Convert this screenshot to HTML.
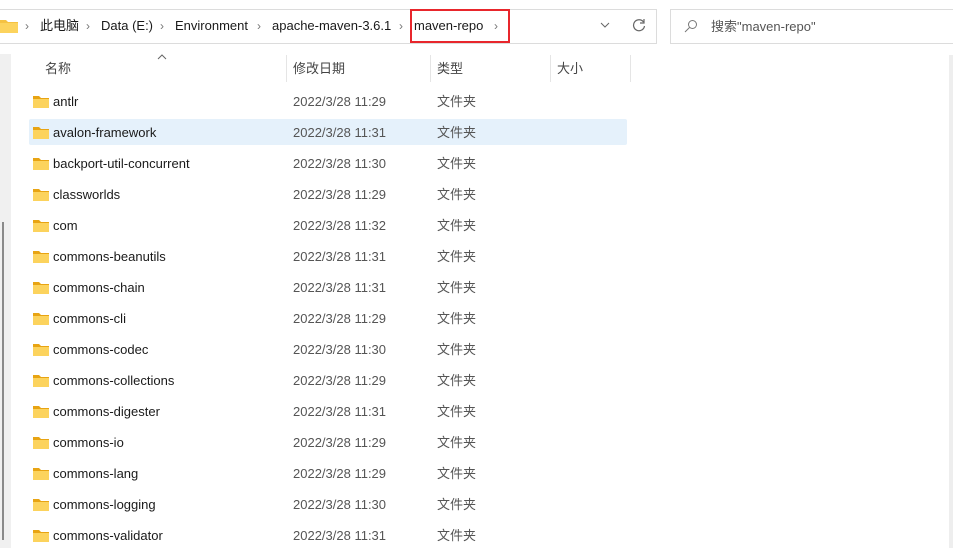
<!DOCTYPE html>
<html><head><meta charset="utf-8"><style>
*{margin:0;padding:0;box-sizing:border-box}
body{width:953px;height:548px;background:#fff;position:relative;overflow:hidden;font-family:"Liberation Sans","Noto Sans CJK SC",sans-serif;font-size:13px;color:#1a1a1a}
span{line-height:16px;height:16px;display:inline-block}
.abs{position:absolute;white-space:nowrap}
.addr{left:-2px;top:9px;width:659px;height:35px;border:1px solid #dcdcdc;border-left:none}
.search{left:670px;top:9px;width:290px;height:35px;border:1px solid #dcdcdc}
.chev{color:#777;font-size:12px}
.hdr{color:#444;font-size:13px}
.sep{position:absolute;top:55px;width:1px;height:27px;background:#e5e5e5}
.row{position:absolute;left:29px;width:598px;height:26px}
.row.sel{background:#e5f1fb;border-radius:2px}
.fold{position:absolute;left:4px;top:7px;width:16px;height:13px}
.nm{position:absolute;left:24px;top:6px}
.dt{position:absolute;left:264px;top:6px;color:#555}
.tp{position:absolute;left:408px;top:6px;color:#555}
</style></head><body>
<div class="abs addr"></div>
<svg class="abs" style="left:0;top:18px" width="18" height="15"><path d="M0 2h6l2 2h10v11H0z" fill="#f5c242"/><rect x="0" y="5" width="18" height="10" fill="#fcd35d"/></svg>
<span class="abs chev" style="left:25px;top:18px">›</span>
<span class="abs" style="left:40px;top:18px">此电脑</span>
<span class="abs chev" style="left:86px;top:18px">›</span>
<span class="abs" style="left:101px;top:18px">Data (E:)</span>
<span class="abs chev" style="left:160px;top:18px">›</span>
<span class="abs" style="left:175px;top:18px">Environment</span>
<span class="abs chev" style="left:257px;top:18px">›</span>
<span class="abs" style="left:272px;top:18px">apache-maven-3.6.1</span>
<span class="abs chev" style="left:399px;top:18px">›</span>
<div class="abs" style="left:410px;top:9px;width:100px;height:34px;border:2px solid #e8262c"></div>
<span class="abs" style="left:414px;top:18px">maven-repo</span>
<span class="abs chev" style="left:494px;top:18px">›</span>
<svg class="abs" style="left:600px;top:22px" width="10" height="6"><path d="M1 1l4 4 4-4" stroke="#666" fill="none"/></svg>
<svg class="abs" style="left:632px;top:18px" width="14" height="14"><path d="M11.5 4A5.5 5.5 0 1 0 12.5 8" stroke="#666" fill="none" stroke-width="1.2"/><path d="M12 1v4H8" stroke="#666" fill="none" stroke-width="1.2"/></svg>
<div class="abs search"></div>
<svg class="abs" style="left:684px;top:19px" width="14" height="14"><circle cx="8.5" cy="5.5" r="4" stroke="#777" fill="none"/><path d="M5.5 8.5L1 13" stroke="#777"/></svg>
<span class="abs" style="left:711px;top:19px;color:#555">搜索"maven-repo"</span>
<div class="abs" style="left:0;top:54px;width:11px;height:494px;background:#f0f0f0"></div>
<div class="abs" style="left:2px;top:222px;width:2px;height:318px;background:#8a8a8a"></div>
<div class="abs" style="left:949px;top:55px;width:4px;height:493px;background:#eee"></div>
<svg class="abs" style="left:157px;top:54px" width="10" height="6"><path d="M1 5l4-4 4 4" stroke="#666" fill="none"/></svg>
<span class="abs hdr" style="left:45px;top:61px">名称</span>
<div class="sep" style="left:286px"></div>
<span class="abs hdr" style="left:293px;top:61px">修改日期</span>
<div class="sep" style="left:430px"></div>
<span class="abs hdr" style="left:437px;top:61px">类型</span>
<div class="sep" style="left:550px"></div>
<span class="abs hdr" style="left:557px;top:61px">大小</span>
<div class="sep" style="left:630px"></div>
<div id="rows"></div>
<script>
var d=[["antlr","11:29"],["avalon-framework","11:31"],["backport-util-concurrent","11:30"],["classworlds","11:29"],["com","11:32"],["commons-beanutils","11:31"],["commons-chain","11:31"],["commons-cli","11:29"],["commons-codec","11:30"],["commons-collections","11:29"],["commons-digester","11:31"],["commons-io","11:29"],["commons-lang","11:29"],["commons-logging","11:30"],["commons-validator","11:31"]];
var h="";d.forEach(function(r,i){h+='<div class="row'+(i==1?' sel':'')+'" style="top:'+(88+i*31)+'px"><svg class="fold" viewBox="0 0 16 13"><path d="M0 1h6l2 2h8v10H0z" fill="#e8a413"/><rect x="0" y="4" width="16" height="9" fill="#fcd35d"/></svg><span class="nm">'+r[0]+'</span><span class="dt">2022/3/28 '+r[1]+'</span><span class="tp">文件夹</span></div>'});
document.getElementById("rows").innerHTML=h;
</script>
</body></html>
